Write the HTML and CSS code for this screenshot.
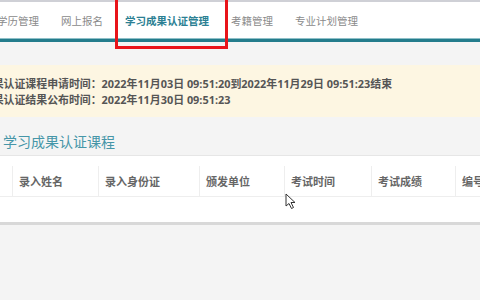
FILE: index.html
```html
<!DOCTYPE html>
<html lang="zh-CN">
<head>
  <meta charset="UTF-8">
  <meta name="viewport" content="width=device-width, initial-scale=1.0">
  <title>学习成果认证管理</title>
  <link rel="stylesheet" href="styles.css">
</head>
<body>
  <div class="topbar">
    <ul class="nav">
      <li class="nav-item">学历管理</li>
      <li class="nav-item">网上报名</li>
      <li class="nav-item active">学习成果认证管理</li>
      <li class="nav-item">考籍管理</li>
      <li class="nav-item">专业计划管理</li>
    </ul>
    <!-- 标注红框 -->
    <div class="mark-box"></div>
  </div>

  <div class="notice">
    <p>学习成果认证课程申请时间：2022年11月03日 09:51:20到2022年11月29日 09:51:23结束</p>
    <p>学习成果认证结果公布时间：2022年11月30日 09:51:23</p>
  </div>

  <h2 class="section-title">学习成果认证课程</h2>

  <div class="panel">
    <table class="course-table">
      <thead>
        <tr>
          <th class="col-check"></th>
          <th class="col-name">录入姓名</th>
          <th class="col-id">录入身份证</th>
          <th class="col-org">颁发单位</th>
          <th class="col-time">考试时间</th>
          <th class="col-score">考试成绩</th>
          <th class="col-no">编号</th>
        </tr>
      </thead>
      <tbody>
        <tr class="empty-row"><td colspan="7"></td></tr>
      </tbody>
    </table>
    <svg class="cursor" width="12" height="17" viewBox="0 0 12 17">
      <path d="M1 1 L1 13 L4 10.5 L6.5 15.5 L8.5 14.5 L6 9.5 L10 9.5 Z" fill="#fff" stroke="#333" stroke-width="1" stroke-linejoin="round"/>
    </svg>
  </div>
</body>
</html>
```

FILE: styles.css
```css
/* 基本样式 */
body {
  margin: 0;
  overflow: hidden;
  background-color: #f4f4f4;
  font-family: "Open Sans", "Noto Sans CJK SC", sans-serif;
  color: #555;
}

/* 顶部导航 */
.topbar {
  position: relative;
  background-color: #fff;
  border-top: 2px solid #cfd0d6;
  border-bottom: 3px solid #237c8c;
  box-shadow: 0 -1px 0 #8fc0c8 inset;
}

.nav {
  display: flex;
  margin: 0 0 0 -14px;
  padding: 0;
  list-style: none;
  height: 37px;
  align-items: center;
}

.nav-item {
  padding: 0 11px;
  font-size: 10.5px;
  color: #8a8a8a;
  white-space: nowrap;
}

.nav-item.active {
  color: #2b7f93;
  font-weight: bold;
}

.mark-box {
  position: absolute;
  left: 115px;
  top: -6px;
  width: 107px;
  height: 47px;
  border: 3px solid #e8141a;
}

/* 提示信息 */
.notice {
  margin-top: 23px;
  background-color: #fdf6e2;
  padding: 11px 0 9px;
  height: 32px;
}

.notice p {
  margin: 0 0 0 -40px;
  font-size: 10.9px;
  line-height: 16px;
  font-weight: bold;
  color: #555;
  white-space: nowrap;
}

/* 标题 */
.section-title {
  margin: 15px 0 0;
  padding: 0 0 3px 3px;
  font-size: 14px;
  line-height: 20px;
  font-weight: normal;
  color: #4696a8;
  border-bottom: 1px solid #e6e6e6;
}

/* 表格 */
.panel {
  position: relative;
  background-color: #fff;
  padding-top: 10px;
  border-bottom: 3px solid #d8d8d8;
}

.course-table {
  border-collapse: collapse;
  table-layout: fixed;
  width: 520px;
}

.course-table th {
  box-sizing: border-box;
  height: 30px;
  padding: 0 6px;
  text-align: left;
  font-size: 11px;
  font-weight: bold;
  color: #666;
  border-left: 1px solid #eee;
  border-bottom: 1px solid #eee;
  white-space: nowrap;
  overflow: hidden;
}

.course-table th:first-child {
  border-left: none;
}

.col-check { width: 12px; }
.col-name { width: 86px; }
.col-id { width: 101px; }
.col-org { width: 85px; }
.col-time { width: 87px; }
.col-score { width: 84px; }
.col-no { width: 65px; }

.empty-row td {
  height: 25px;
  padding: 0;
}

.cursor {
  position: absolute;
  left: 285px;
  top: 37px;
}
```
